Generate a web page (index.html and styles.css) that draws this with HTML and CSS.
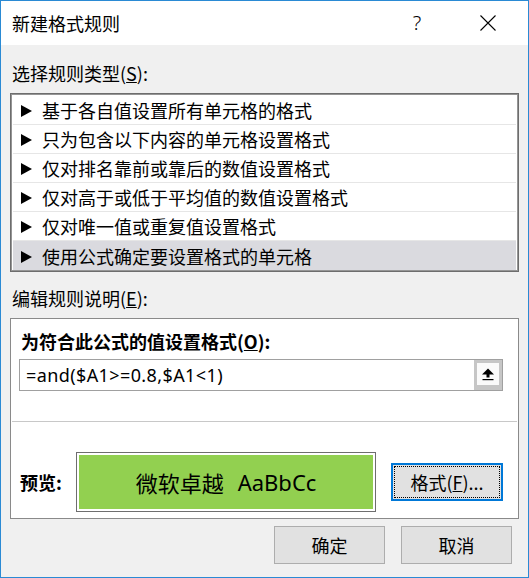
FILE: index.html
```html
<!DOCTYPE html>
<html lang="zh-CN">
<head>
<meta charset="utf-8">
<title>新建格式规则</title>
<link rel="stylesheet" href="styles.css">
</head>
<body>
<div class="window">
  <div class="titlebar">
    <span class="title">新建格式规则</span>
    <span class="help">?</span>
    <span class="close">
      <svg width="16" height="16" viewBox="0 0 16 16"><path d="M0.5 0.5 L15.5 15.5 M15.5 0.5 L0.5 15.5" stroke="#000" stroke-width="1.1" fill="none"/></svg>
    </span>
  </div>
  <div class="content">
    <div class="label">选择规则类型(<u>S</u>):</div>
    <div class="list">
      <div class="item"><span class="tri"></span>基于各自值设置所有单元格的格式</div>
      <div class="item"><span class="tri"></span>只为包含以下内容的单元格设置格式</div>
      <div class="item"><span class="tri"></span>仅对排名靠前或靠后的数值设置格式</div>
      <div class="item"><span class="tri"></span>仅对高于或低于平均值的数值设置格式</div>
      <div class="item"><span class="tri"></span>仅对唯一值或重复值设置格式</div>
      <div class="item selected"><span class="tri"></span>使用公式确定要设置格式的单元格</div>
    </div>
    <div class="label label2">编辑规则说明(<u>E</u>):</div>
    <div class="editbox">
      <div class="heading">为符合此公式的值设置格式(<u>O</u>):</div>
      <div class="input">
        <span class="formula">=and($A1&gt;=0.8,$A1&lt;1)</span>
        <span class="refbtn">
          <svg width="12" height="13" viewBox="0 0 12 13"><path d="M0 6.5 L6 0.5 L12 6.5 Z" fill="#000"/><rect x="4.5" y="6" width="3" height="3.5" fill="#000"/><rect x="0.5" y="11" width="11" height="1.2" fill="#000"/></svg>
        </span>
      </div>
      <div class="sep"></div>
      <div class="preview-row">
        <div class="preview-label">预览:</div>
        <div class="preview-box"><div class="preview-fill"><span>微软卓越</span><span class="latin">AaBbCc</span></div></div>
        <button class="btn fmt"><span class="focus">格式(<u>F</u>)...</span></button>
      </div>
    </div>
    <div class="actions">
      <button class="btn">确定</button>
      <button class="btn">取消</button>
    </div>
  </div>
</div>
</body>
</html>
```

FILE: styles.css
```css
* { box-sizing: border-box; }
html, body { margin: 0; padding: 0; }
body {
  width: 529px;
  height: 578px;
  font-family: "Noto Sans CJK SC", sans-serif;
  color: #000;
  background: #fff;
  overflow: hidden;
}
.window {
  width: 529px;
  height: 578px;
  border: 1px solid #2a8ad4;
  background: #f0f0f0;
  display: flex;
  flex-direction: column;
}
.titlebar {
  height: 44px;
  flex: none;
  background: #fff;
  display: flex;
  align-items: center;
}
.title {
  padding-left: 11px;
  font-size: 18px;
  line-height: 24px;
}
.help {
  margin-left: auto;
  margin-right: 33px;
  width: 30px;
  text-align: center;
  font-family: "Noto Sans", sans-serif;
  font-weight: 300;
  font-size: 20px;
  line-height: 24px;
}
.close {
  width: 46px;
  margin-right: 17px;
  display: flex;
  justify-content: center;
}
.content {
  flex: 1;
  padding: 16px 9px 0;
}
.label {
  height: 24px;
  line-height: 24px;
  font-size: 18px;
  padding-left: 2px;
}
.list {
  margin-top: 8px;
  border: 1px solid #6d6d6d;
  box-shadow: inset 0 0 0 1px #959595;
  background: #fff;
  padding: 2px 2px 1px;
}
.item {
  height: 29px;
  border-bottom: 1px solid #e6e6e6;
  display: flex;
  align-items: center;
  padding-left: 8px;
  font-size: 18px;
  white-space: nowrap;
}
.item.selected {
  background: #dadadf;
  border-bottom: none;
}
.tri {
  width: 0;
  height: 0;
  border-left: 11px solid #000;
  border-top: 6px solid transparent;
  border-bottom: 6px solid transparent;
  margin-right: 10px;
  margin-top: 2px;
}
.label2 { margin-top: 14px; }
.editbox {
  margin-top: 8px;
  height: 201px;
  border: 1px solid #8a8a8a;
  background: #fff;
  padding: 10px 0 6px;
}
.heading {
  font-weight: bold;
  font-size: 18px;
  line-height: 24px;
  padding-left: 10px;
}
.input {
  margin: 6px 15px 0 8px;
  height: 32px;
  border: 1px solid #a0a0a0;
  display: flex;
  align-items: stretch;
}
.formula {
  flex: 1;
  padding-left: 6px;
  font-family: "Noto Sans", sans-serif;
  font-size: 18px;
  letter-spacing: 0.4px;
  display: flex;
  align-items: center;
}
.refbtn {
  width: 28px;
  border: 3px solid #c6c6c6;
  border-bottom-width: 5px;
  background: #fafafa;
  display: flex;
  align-items: center;
  justify-content: center;
}
.sep {
  margin: 30px 1px 0;
  height: 1px;
  background: #c8c8c8;
}
.preview-row {
  margin-top: 30px;
  height: 60px;
  display: flex;
  align-items: center;
}
.preview-label {
  width: 65px;
  padding-left: 9px;
  font-weight: bold;
  font-size: 18px;
}
.preview-box {
  width: 300px;
  height: 60px;
  border: 1px solid #6e6e6e;
  padding: 2px;
  background: #fff;
}
.preview-fill {
  height: 100%;
  background: #92d050;
  display: flex;
  align-items: center;
  justify-content: center;
  font-size: 22px;
  white-space: nowrap;
  gap: 14px;
}
.preview-fill .latin {
  font-family: "Noto Sans", sans-serif;
}
.btn {
  width: 111px;
  height: 38px;
  border: 1px solid #adadad;
  background: #e1e1e1;
  font-family: "Noto Sans CJK SC", sans-serif;
  font-size: 18px;
  color: #000;
  padding: 0;
}
.fmt {
  margin-left: 15px;
  width: 112px;
  border: 2px solid #0078d7;
  padding: 1px;
}
.fmt .focus {
  height: 100%;
  border: 1px dotted #000;
  display: flex;
  align-items: center;
  justify-content: center;
}
.actions {
  display: flex;
  justify-content: flex-end;
  gap: 16px;
  margin-top: 7px;
  padding-right: 7px;
}
```
